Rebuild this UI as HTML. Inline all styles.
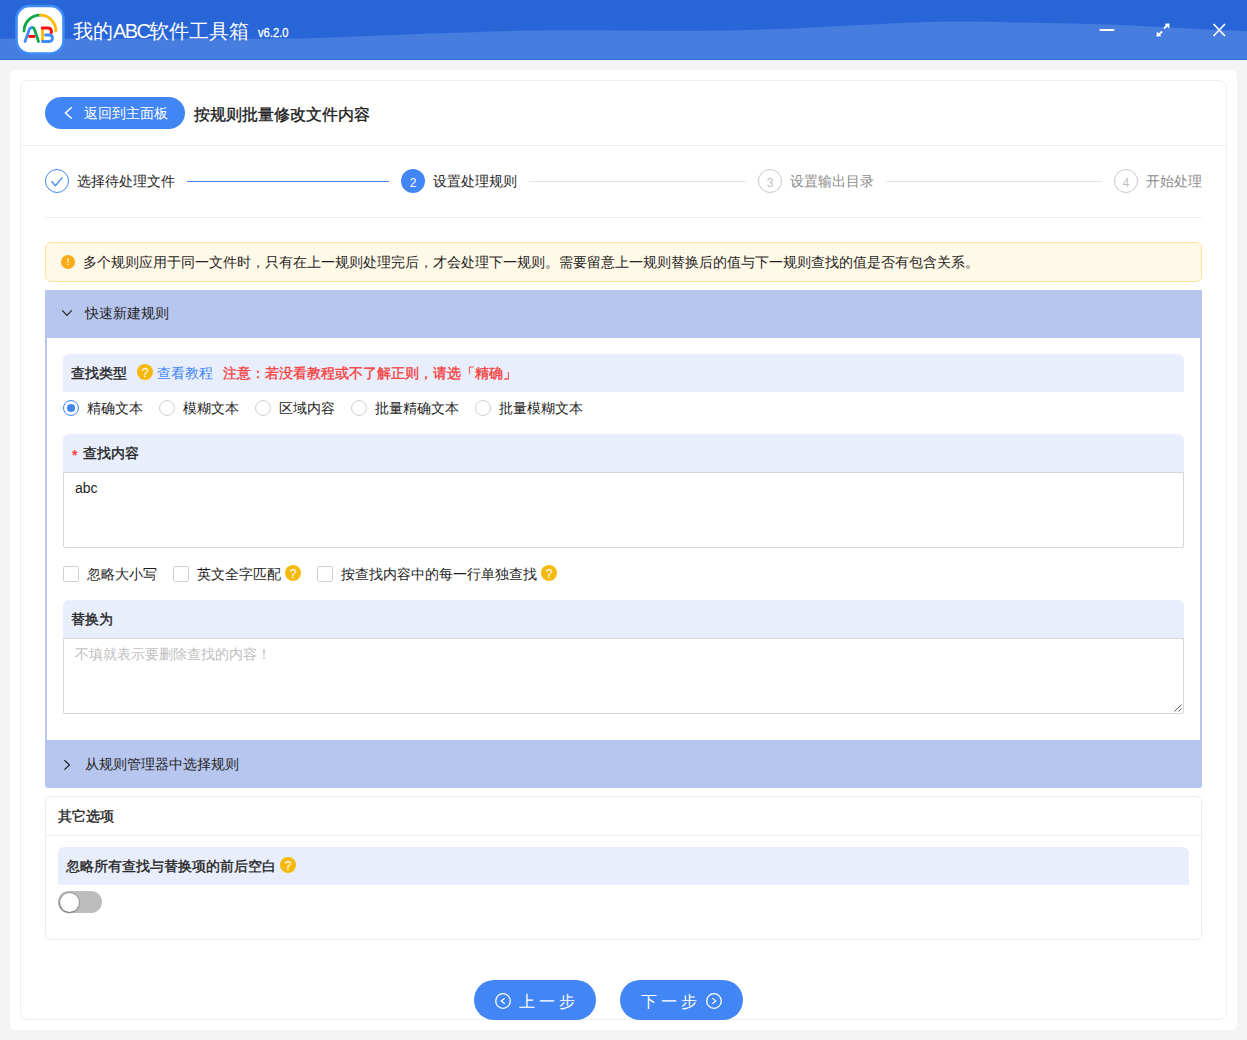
<!DOCTYPE html>
<html><head><meta charset="utf-8">
<style>
*{box-sizing:border-box;margin:0;padding:0}
html,body{width:1247px;height:1040px;overflow:hidden}
body{background:#f4f4f4;font-family:"Liberation Sans",sans-serif;font-size:14px;color:#1f1f1f;position:relative}
.abs{position:absolute}
.t{position:absolute;white-space:nowrap;line-height:20px}
#hdr{left:0;top:0;width:1247px;height:60px;background:#2866d7;overflow:hidden}
#panel{left:10px;top:70px;width:1227px;height:960px;background:#fff;border-radius:6px}
#card{left:20px;top:80px;width:1207px;height:940px;border:1px solid #efefef;border-radius:8px;background:#fff}
.btn-back{left:45px;top:97px;width:140px;height:32px;border-radius:16px;background:#4286f5}
.divider{height:1px;background:#efefef}
.circ{width:24px;height:24px;border-radius:50%;border:1px solid #c8c8c8;text-align:center;line-height:26px;font-size:12px;color:#c0c0c0}
.stepline{height:1px;background:#e4e4e4}
.warn{left:45px;top:242px;width:1157px;height:40px;border:1px solid #fee39b;background:#fff9e8;border-radius:6px}
.sechdr{background:#b7c6ee}
.lbl{background:#e8eefb;border-radius:6px 6px 0 0}
.ta{border:1px solid #d6d6d6;background:#fff;border-radius:0 0 2px 2px}
.radio{width:16px;height:16px;border-radius:50%;border:1px solid #d0d0d0;background:#fff}
.chk{width:16px;height:16px;border-radius:2px;border:1px solid #d0d0d0;background:#fff}
.q{width:16px;height:16px;border-radius:50%;background:#f5b90b;color:rgba(255,255,255,.8);font-size:12px;line-height:19px;-webkit-text-stroke:.3px rgba(255,255,255,.8);text-align:center}
.b{font-weight:500;-webkit-text-stroke:0.35px currentColor}
.nbtn{top:980px;height:40px;border-radius:20px;background:#4286f5}
</style></head><body>

<div id="hdr" class="abs">
  <svg class="abs" style="left:0;top:0" width="1247" height="60" viewBox="0 0 1247 60">
    <path d="M0 38.8 C33.3 38.78 101.7 38.75 150.0 38.70 C198.3 38.65 253.3 38.95 290.0 38.50 C326.7 38.05 345.0 36.87 370.0 36.00 C395.0 35.13 413.3 34.23 440.0 33.30 C466.7 32.37 505.0 30.90 530.0 30.40 C555.0 29.90 561.7 30.23 590.0 30.30 C618.3 30.37 668.3 31.02 700.0 30.80 C731.7 30.58 753.3 29.97 780.0 29.00 C806.7 28.03 833.3 26.22 860.0 25.00 C886.7 23.78 913.3 22.10 940.0 21.70 C966.7 21.30 993.3 22.17 1020.0 22.60 C1046.7 23.03 1073.3 23.40 1100.0 24.30 C1126.7 25.20 1155.5 26.83 1180.0 28.00 C1204.5 29.17 1227.0 30.47 1247.0 31.30 L1247 60 L0 60 Z" fill="#467dde"/>
    <rect x="0" y="59" width="1247" height="1" fill="#3570da"/>
    <path d="M1100.5 30 H1113.5" stroke="#fff" stroke-width="2.2" stroke-linecap="round"/>
    <g stroke="#fff" stroke-width="1.8" fill="none">
      <path d="M1164 28.5 L1168 24.5"/><path d="M1162 31.5 L1158 35.5"/>
    </g>
    <path d="M1169.5 23.5 L1164.5 23.8 L1169.2 28.5 Z" fill="#fff"/>
    <path d="M1156.5 36.5 L1161.5 36.2 L1156.8 31.5 Z" fill="#fff"/>
    <path d="M1213.5 24 L1225 36 M1225 24 L1213.5 36" stroke="#fff" stroke-width="1.7"/>
  </svg>
  <svg class="abs" style="left:14px;top:4px" width="52" height="52" viewBox="0 0 52 52">
    <rect x="2.5" y="2" width="47" height="47.5" rx="13" fill="#fff" stroke="#3d8cf8" stroke-width="2.6"/>
    <g fill="none" stroke-width="2.8" stroke-linecap="round">
      <path d="M10 27 A16 16 0 0 1 26.5 11.2" stroke="#0ca84a"/>
      <path d="M26.5 11.2 A15.5 15.5 0 0 1 41.8 27" stroke="#fbbb06"/>
      <path d="M11 37.5 L15.5 25 Q17.5 22.5 19.5 24" stroke="#3f8ef7"/>
      <path d="M19.5 24 Q20.5 25 21 27 L24.5 37.5" stroke="#0ca84a"/>
      <path d="M15.5 32.5 H20" stroke="#f80e0e"/>
      <path d="M28.5 24.5 V36.5" stroke="#fbbb06"/>
      <path d="M28.2 24 H34 Q37.5 24 37.5 28 L37 29" stroke="#f80e0e"/>
      <path d="M31.5 31 H35 Q38.5 31 38.5 34 Q38.5 37.5 35 37.5 H28.5" stroke="#3f8ef7"/>
    </g>
  </svg>
  <div class="t" style="left:73px;top:20px;font-size:20px;line-height:22px;color:#fff">我的<span style="letter-spacing:-1.6px">ABC</span>软件工具箱</div>
  <div class="t" style="left:258px;top:23px;font-size:13px;color:#fff;transform:scaleX(.86);transform-origin:0 0;-webkit-text-stroke:.3px #fff">v6.2.0</div>
</div>

<div id="panel" class="abs"></div>
<div id="card" class="abs"></div>

<!-- back button -->
<div class="abs btn-back"></div>
<svg class="abs" style="left:60px;top:104px" width="16" height="18" viewBox="60 104 16 18"><path d="M71.75 107.25 L65.5 113 L71.75 118.5" fill="none" stroke="#fff" stroke-width="1.5"/></svg>
<div class="t" style="left:84px;top:103px;color:#fff">返回到主面板</div>
<div class="t" style="left:194px;top:105px;font-size:16px;color:#1a1a1a;font-weight:500;-webkit-text-stroke:0.35px #1a1a1a">按规则批量修改文件内容</div>
<div class="abs divider" style="left:21px;top:145px;width:1205px"></div>

<!-- steps -->
<div class="abs circ" style="left:45px;top:169px;border-color:#4286f5"></div>
<svg class="abs" style="left:45px;top:169px" width="24" height="24" viewBox="45 169 24 24"><path d="M51.5 181.3 L55.4 185.7 L62.5 177.4" fill="none" stroke="#4286f5" stroke-width="1.3"/></svg>
<div class="t" style="left:77px;top:171px;color:#1f1f1f">选择待处理文件</div>
<div class="abs" style="left:187px;top:181px;width:202px;height:1px;background:#4286f5"></div>
<div class="abs circ" style="left:401px;top:169px;border:none;background:#4286f5;color:#fff;line-height:29px">2</div>
<div class="t" style="left:433px;top:171px;color:#1f1f1f">设置处理规则</div>
<div class="abs stepline" style="left:529px;top:181px;width:217px"></div>
<div class="abs circ" style="left:758px;top:169px">3</div>
<div class="t" style="left:790px;top:171px;color:#8c8c8c">设置输出目录</div>
<div class="abs stepline" style="left:886px;top:181px;width:216px"></div>
<div class="abs circ" style="left:1114px;top:169px">4</div>
<div class="t" style="left:1146px;top:171px;color:#8c8c8c">开始处理</div>
<div class="abs divider" style="left:45px;top:217px;width:1157px"></div>

<!-- warning -->
<div class="abs warn"></div>
<svg class="abs" style="left:60px;top:254px" width="16" height="16" viewBox="60 254 16 16"><circle cx="68" cy="262" r="7" fill="#f9ab1a"/><rect x="67.1" y="258" width="1.8" height="5.2" fill="#fdd889"/><rect x="67.1" y="264.2" width="1.8" height="1" fill="#fdd889"/></svg>
<div class="t" style="left:83px;top:252px;color:#1f1f1f">多个规则应用于同一文件时，只有在上一规则处理完后，才会处理下一规则。需要留意上一规则替换后的值与下一规则查找的值是否有包含关系。</div>

<!-- section 1 -->
<div class="abs sechdr" style="left:45px;top:290px;width:1157px;height:48px"></div>
<div class="t" style="left:85px;top:303px;color:#1f1f1f">快速新建规则</div>
<svg class="abs" style="left:58px;top:304px" width="18" height="16" viewBox="58 304 18 16"><path d="M62.2 310.4 L67 315.4 L71.7 310.4" fill="none" stroke="#222" stroke-width="1.2"/></svg>
<div class="abs" style="left:45px;top:338px;width:1157px;height:402px;border:2px solid #b7c6ee;border-top:none;border-bottom:none"></div>

<div class="abs lbl" style="left:63px;top:354px;width:1121px;height:38px"></div>
<div class="t b" style="left:71px;top:363px">查找类型</div>
<div class="abs q" style="left:137px;top:364px">?</div>
<div class="t" style="left:157px;top:363px;color:#4286f5">查看教程</div>
<div class="t b" style="left:223px;top:363px;color:#f5403d">注意：若没看教程或不了解正则，请选「精确」</div>

<div class="abs radio" style="left:63px;top:400px;border-color:#4286f5"></div>
<div class="abs" style="left:67px;top:404px;width:8px;height:8px;border-radius:50%;background:#4286f5"></div>
<div class="t" style="left:87px;top:398px">精确文本</div>
<div class="abs radio" style="left:159px;top:400px"></div>
<div class="t" style="left:183px;top:398px">模糊文本</div>
<div class="abs radio" style="left:255px;top:400px"></div>
<div class="t" style="left:279px;top:398px">区域内容</div>
<div class="abs radio" style="left:351px;top:400px"></div>
<div class="t" style="left:375px;top:398px">批量精确文本</div>
<div class="abs radio" style="left:475px;top:400px"></div>
<div class="t" style="left:499px;top:398px">批量模糊文本</div>

<div class="abs lbl" style="left:63px;top:434px;width:1121px;height:38px"></div>
<div class="t" style="left:72px;top:445px;color:#f5403d;font-weight:bold">*</div>
<div class="t b" style="left:83px;top:443px">查找内容</div>
<div class="abs ta" style="left:63px;top:472px;width:1121px;height:76px"></div>
<div class="t" style="left:75px;top:478px;font-size:14px">abc</div>

<div class="abs chk" style="left:63px;top:566px"></div>
<div class="t" style="left:87px;top:564px">忽略大小写</div>
<div class="abs chk" style="left:173px;top:566px"></div>
<div class="t" style="left:197px;top:564px">英文全字匹配</div>
<div class="abs q" style="left:285px;top:565px">?</div>
<div class="abs chk" style="left:317px;top:566px"></div>
<div class="t" style="left:341px;top:564px">按查找内容中的每一行单独查找</div>
<div class="abs q" style="left:541px;top:565px">?</div>

<div class="abs lbl" style="left:63px;top:600px;width:1121px;height:38px"></div>
<div class="t b" style="left:71px;top:609px">替换为</div>
<div class="abs ta" style="left:63px;top:638px;width:1121px;height:76px"></div>
<div class="t" style="left:75px;top:644px;color:#c0c0c0">不填就表示要删除查找的内容！</div>
<svg class="abs" style="left:1172px;top:702px" width="11" height="11" viewBox="1172 702 11 11"><path d="M1174.5 711.5 L1181.5 704.5 M1178.5 711.5 L1181.5 708.5" stroke="#555" stroke-width="1"/></svg>

<!-- section 2 -->
<div class="abs sechdr" style="left:45px;top:740px;width:1157px;height:48px;border-radius:0 0 3px 3px"></div>
<div class="t" style="left:85px;top:754px;color:#1f1f1f">从规则管理器中选择规则</div>
<svg class="abs" style="left:58px;top:756px" width="18" height="18" viewBox="58 756 18 18"><path d="M64.4 760.3 L69.5 765 L64.4 769.6" fill="none" stroke="#222" stroke-width="1.2"/></svg>

<!-- other options -->
<div class="abs" style="left:45px;top:796px;width:1157px;height:144px;border:1px solid #eeeeee;border-radius:6px"></div>
<div class="t b" style="left:58px;top:806px">其它选项</div>
<div class="abs divider" style="left:46px;top:835px;width:1155px"></div>
<div class="abs lbl" style="left:58px;top:847px;width:1131px;height:38px;border-radius:6px 6px 0 0"></div>
<div class="t b" style="left:66px;top:856px">忽略所有查找与替换项的前后空白</div>
<div class="abs q" style="left:280px;top:857px">?</div>
<div class="abs" style="left:58px;top:891px;width:44px;height:22px;border-radius:11px;background:#bdbdbd"></div>
<div class="abs" style="left:59.5px;top:892.5px;width:19px;height:19px;border-radius:50%;background:#fff;box-shadow:0 0 0 1px rgba(0,0,0,.18),-0.5px 1px 2px rgba(0,0,0,.3)"></div>

<!-- nav buttons -->
<div class="abs nbtn" style="left:474px;width:122px"></div>
<div class="t" style="left:519px;top:992px;color:#fff;font-size:16px;letter-spacing:4px">上一步</div>
<svg class="abs" style="left:493px;top:991px" width="20" height="20" viewBox="493 991 20 20"><circle cx="503" cy="1001" r="7.3" fill="none" stroke="#fff" stroke-width="1.3"/><path d="M504.75 998.2 L501.2 1000.9 L504.75 1003.7" fill="none" stroke="#fff" stroke-width="1.2"/></svg>
<div class="abs nbtn" style="left:620px;width:123px"></div>
<div class="t" style="left:641px;top:992px;color:#fff;font-size:16px;letter-spacing:4px">下一步</div>
<svg class="abs" style="left:704px;top:991px" width="20" height="20" viewBox="704 991 20 20"><circle cx="714" cy="1001" r="7.3" fill="none" stroke="#fff" stroke-width="1.3"/><path d="M712.25 998.1 L715.8 1000.9 L712.25 1003.7" fill="none" stroke="#fff" stroke-width="1.2"/></svg>

</body></html>
